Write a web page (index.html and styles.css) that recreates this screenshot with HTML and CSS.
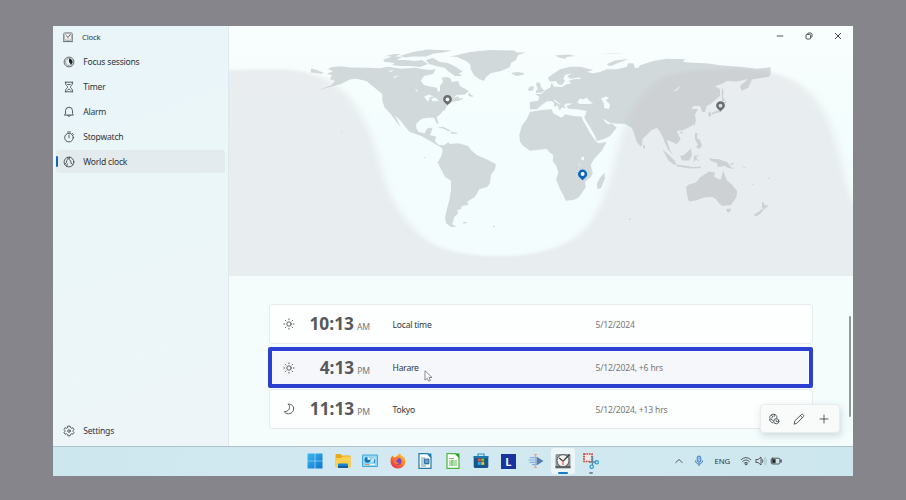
FILE: index.html
```html
<!DOCTYPE html>
<html lang="en">
<head>
<meta charset="utf-8">
<title>Clock</title>
<link rel="stylesheet" href="styles.css">
</head>
<body>
<div class="desktop">
  <div class="app">
    <nav class="nav">
      <div class="nav-title">
        <svg class="ico" viewBox="0 0 12 12"><rect x="1.500" y="1.800" width="9" height="8.700" rx="1.500" fill="#cfd6d9" stroke="#7e888c" stroke-width=".9"/><circle cx="6" cy="6" r="3.700" fill="#f6f8f8" stroke="#909a9e" stroke-width=".7"/><path d="M4 4.500L6 6.300 8.500 3.300" fill="none" stroke="#53595c" stroke-width=".9"/><path d="M6 6.200V8.600" stroke="#e28468" stroke-width=".9"/><path d="M1 10.600h10" stroke="#6f777a"/></svg>
        <span>Clock</span>
      </div>
      <div class="nav-item">
        <svg class="ico" viewBox="0 0 12 12"><circle cx="6" cy="6" r="4.900" fill="none" stroke="#444" stroke-width=".8"/><circle cx="6" cy="6" r="3.400" fill="none" stroke="#555" stroke-width=".8" stroke-dasharray="1.200 .5"/><path d="M6 2.500a3.500 3.500 0 0 1 2.100 6.200L6 6z" fill="#222"/></svg>
        <span>Focus sessions</span>
      </div>
      <div class="nav-item">
        <svg class="ico line" viewBox="0 0 12 12"><path d="M2.200 1.200h7.600M2.200 10.800h7.600M2.700 1.300v1.800C2.700 4.300 4.600 5 4.600 6S2.700 7.700 2.700 8.900v1.800M9.300 1.300v1.800C9.300 4.300 7.400 5 7.400 6S9.300 7.700 9.300 8.900v1.800M4.700 3.500h2.600M4.700 9l1.300-1.100L7.300 9"/></svg>
        <span>Timer</span>
      </div>
      <div class="nav-item">
        <svg class="ico line" viewBox="0 0 12 12"><path d="M1.700 9.100h8.600L9.500 7.500V4.700a3.500 3.500 0 0 0-7 0v2.800zM4.700 9.200c.2 1.800 2.400 1.800 2.600 0"/></svg>
        <span>Alarm</span>
      </div>
      <div class="nav-item">
        <svg class="ico line" viewBox="0 0 12 12"><circle cx="6" cy="6.600" r="4.300"/><path d="M4.500 1h3M6 4v2.800M9.400 2.500l1 1"/></svg>
        <span>Stopwatch</span>
      </div>
      <div class="nav-item selected">
        <svg class="ico line" viewBox="0 0 12 12"><circle cx="6" cy="6" r="4.900"/><path d="M4.600 1.500L5.300 3 3.600 4.700 3.500 6.600 1.700 8.200M6.700 1.200L6 3.200 7.700 5l.4 2.200 1.800 1.500M3.700 10.300L4.300 8"/></svg>
        <span>World clock</span>
      </div>
      <div class="nav-item settings">
        <svg class="ico line" viewBox="0 0 12 12"><path d="M4.900 1.200h2.200l.4 1.400 1 .6 1.400-.4 1.100 1.900-1 1v.7l1 1L9.900 9.200l-1.400-.4-1 .6-.4 1.400H4.900l-.4-1.400-1-.6-1.400.4L1 7.300l1-1v-.7l-1-1 1.100-1.900 1.400.5 1-.6z"/><circle cx="6" cy="6" r="1.300"/></svg>
        <span>Settings</span>
      </div>
    </nav>
    <main class="main">
      <svg class="map" viewBox="229 26 624 250">
        <defs>
          <filter id="soft" x="-10%" y="-10%" width="120%" height="120%"><feGaussianBlur stdDeviation="4 1.500"/></filter>
        </defs>
        <g class="land">
          <path d="M311 68.500l6 1.500 7 3-3 .8-5-.8-5-.5zM311 65.300l2 0-1 .8z"/>
          <path d="M328 68.700L332 67 341 66.300 350 67.500 368 67.700 379.700 68.300 388 66.700 401 68.700 414.700 67.700 422 69 430 70 436 69 433 74 424 76 420.700 81 424 85 428 86 436.700 87.700 438 92 440 91 440 86 443 82 441.700 77.700 446 77 450 78 452 82 458 81 460 86 463 87.700 469 91 465 94.500 456.700 95 452 99 458 96 459 98.500 463.700 97.700 460 100.500 451.700 102 446.700 106 445 110 443 111 440 114.500 436.700 117 438.500 123.500 437 124 434 117.700 428 117.700 423 118.500 419.700 120.300 416.300 124 416.300 128 418.700 132 424.700 133.300 427 128.500 432.500 127.500 431 133 429.500 135 436 136.500 435 141.500 439 145 446 145.500 442 148 436 144.500 431 141.500 421.300 136 409.700 132 404.700 126 400 120 394.700 115.300 400.700 126.700 398 124 390.700 114 384.700 107.700 382.300 101 382.300 94.300 374.700 87.700 366.300 81 356.300 78.700 350 79.500 341 84 330 87 318 90 331 85.500 335 81 329.700 79 332 75.500 327 73.500 333 71.500z"/>
          <path d="M383 60l10-4 9 1-5 3 10 0 8 1 7-1 6 4-8 3-11-1-9 0-8-1 3-2-10-1zM400 56l13-4 15-2.500 24 1-9 2-9 1-8 3-13 0-8 1zM426 60l7-2 7 4 8 1 8 4 7 5-4 1 3 3-7 0-7-5-3-3-9-2-7-2zM386 56l8-2 7 0-7 3z"/>
          <path d="M453 56l17-4 20-2 24 .5 3 2 9 0-8 2.500-2 5-5 3-1 4-9 4-10 2-5 4-2 4-5-2-5-4-3-5-1-6-4-3-9-4-9-1zM511 73l6-1 7 1-1 2-7 1zM555 55.500l14-1 6 1.500-8 1-2 2-6-1.500zM600 54l14-1 11 0M607 64l8-3.500 14-1.500-11 4-7 3-3-.5zM468 95.500l1.500-3.500 1 2.500 3 1.500-1.500 1z"/>
          <path d="M437 127.500l6-.7 9 4.500-4-.3-5-2.500zM451 132l5 .3 2 1.200-7 .5z"/>
          <path d="M441.700 146.700L448.300 142.300 450 144 458.300 143.300 468.300 146 471 150 476.700 155 486.700 159.300 496 164.300 495 169.300 491 175 490 183.300 487.300 186.700 479.300 189.300 475 196.700 467.300 201.700 468.300 205 461.700 206 461 209.300 457.300 210 458.300 213.300 454 217.300 453.300 221.700 452 224 456.700 227 450.700 226.700 446 223.300 445 217.300 446.700 210 449.300 200 451 190 451 180.700 445 176.700 439.300 166 437.700 162.300 441 156.700 442.700 150.700z"/>
          <path d="M463 222l4 0-1 1.500-3-.3zM424 157h1.500v1H424zM493 226h2v1h-2z"/>
          <path d="M530 109.300L529.700 102 538.300 100.700 539.300 96.700 535 94.300 541.700 93.700 545 90.300 550 87.700 551.700 82.700 554 86.700 561.700 87 566.700 84.300 571.700 83.300 568.300 81 573.300 79.300 581.700 78.700 579 77.500 570 78.700 567.300 76 571.700 73.300 565 75 563.300 78.700 565 81 561.700 85.300 558.300 84.300 556 81 550 81.700 547.700 77.700 553.300 73.700 560 69.300 570 66.700 580 66.700 593.300 70 586.700 72 593.300 73.300 600 72 606.700 69.300 616.700 69.300 626.700 67 628.300 63.300 633.300 63.300 635 68 638.300 67.700 640 65.300 653.300 61 666.700 58.700 685 59.300 683 62 693 62.700 706.700 63.300 720 65.300 740 66.700 756.700 68.700 770.700 67.300V73.300L769 76.700 761.700 77.700 752 79.500 748.500 87.500 741.700 91 740 86 748 79 736.700 81.500 726.700 81 722 84 715 86 720 89.300 720 96 711.700 103.300 706.700 106 705 112 702.300 112 700 106 693.300 106 691.700 108.700 698 109.300 695 114.300 696 121 691.700 126 683.300 130 676.700 131 680.700 139.300 676.700 144.300 670 141 666.700 140 670 150 673.500 155.500 668.300 150 664.500 142 663.300 138.300 660 131.700 657 128 651.700 130 646.700 135 642.500 139 642 145 640.700 146.700 636.700 141.700 634 133.300 632 128 625 123.700 616.700 123.700 610 122.700 603.300 118.700 605 122 608.300 124.300 612 123.500 616.700 127.700 610 136 604 139 596.700 141 595 136 588.300 124.300 584.300 117.700 586.700 111 576.700 109.300 568.300 108.700 566.700 106 573 103.500 566 103.500 564 105.500 566 108.700 562 107 560 104 555 100 554 101 563.300 106.700 560 109 558 106.500 551.700 101 546.700 101.500 541 105.500 537.300 109.300z"/>
          <path d="M536 90.500l2-1.500-2-4 1-3 3 1 1 4 3 3.500-2 2-6 .5zM528 89l3-3 3 .5-1 4-4 .5zM554 102l2 0 0 5-2-1zM557 108.500l4 0-1 1.500z"/>
          <path d="M530 112L541.700 110 551.700 109.300 553.300 113.300 561.700 117.700 565 114.300 573.300 116 581.700 116.700 583.300 121 590 132.700 595.700 141 598.300 143.300 606.700 142 601.700 150.700 593.300 160 590.700 165 592.700 173.300 590.700 177.300 585 181.700 585.700 187.300 582.700 191.700 578.300 197.700 573.300 200 565.700 200.700 563.300 195 560 189.300 556 179.300 558.300 172.700 556.700 166.700 552.700 160.700 553.300 155 550 152.700 546.700 149 536.700 150 530 150.700 523.300 146 520 141.700 519.300 135 521.700 126 526.700 119.300z"/>
          <path d="M604.300 172.700L605 178.300 601 188.300 597.300 189 597 183.300 600 177.700zM643 144l2 2.500 0 2-2-.5z"/>
          <path d="M722 87l1.500 4-.5 6 2 4-3 0-.5-7zM721 103l6-2-2 3-2 4-2 4-5 1-5 2 2-3 6-2 3-3zM708 113l3-1 0 4-2 1zM694 121l1.500 1-1 4-1.500-2zM680.500 132l2-1 0 2-2 1zM695 133l2.500 0-.5 5 3 2 2 6-3 3-3-2 2-2-3-6z"/>
          <path d="M662.500 149.500l6 5 6 6 2 4-3 0-5-4zM676 164.500l8 1 9 1.500 8-.5 0 1.500-11 .5-13-2zM680 156l4-1 7-6.500 1 7-3 5-7 0zM694 156l6-1-4 2.500 3.500 4.500-3.500-2.500-2.500 3zM709 158l5 1 4 0 9 3 4 5 3 2-6-1-3-2-7 1-1-4-6-2zM729 164l6-1.500-3 2.500z"/>
          <path d="M751 183l3 1.500-1 .5zM741 165.500l5 2.500-1 .5zM767 179l3-1.500-1 1.500z"/>
          <path d="M686 187L689 184.500 696 182.500 700 177.500 706 173.500 709 171.500 715 172.500 714 176.500 719 179.500 721 179 723 170.500 727 180.500 732 184.500 737 191 736.500 197 731 205 722 206 718 202 716 199 712 197 704 197.500 696 200.500 689 201.500 687 195zM726 209l5-.5-1 3.500-2.500.5zM762 201l3 4 4 .5-5 4-2-2zM754 214.500l5-3 3.500-3 1 1.500-4 4.500-4 2z"/>
          <path d="M341 131l1 .5M629 219l2 .5" fill="none" stroke="#d2d9db"/>
        </g>
        <g class="sea">
          <path d="M577 102.500l3-4 3 1 4-2 1 2 5 4-7 .5-6 0zM601 98.500l5-2 3 1-3 3 4 4-1 4.500-5-1 0-4.500zM424 96.500l5-2 5 2-4 .5-2 5zM431 98.500l4-1 4 3-6 1zM415 88l3 3-1 1zM393 77l6-2-4 3zM388 71l6-1-3 2zM581 158l3-1.500 0 3-2 1zM579 162l1 5-1-2zM674 90.500l7-5-3 4-4 2z"/>
        </g>
        <path class="night" filter="url(#soft)" d="M209 70L275 69C315 69 334 81 348 96C366 117 373 139 380 163C388 194 399 216 425 239C443 251 468 256 498 256C533 256 556 249 573 239C598 222 608 188 616 156C625 116 641 87 666 76C683 70 710 69 733 69C770 69 795 76 812 95C830 114 837 143 843 168C847 184 850 196 856 205L880 215V300H209Z"/>
        <g class="pin"><path d="M447.500 105.200c-1-1.500-4.400-3-4.400-5.900a4.400 4.400 0 0 1 8.800 0c0 2.900-3.400 4.400-4.400 5.900z"/><circle cx="447.500" cy="99.400" r="1.900" fill="#f2f6f6"/></g>
        <g class="pin"><path d="M720.500 111.500c-1-1.500-4.400-3-4.400-5.900a4.400 4.400 0 0 1 8.800 0c0 2.900-3.400 4.400-4.400 5.900z"/><circle cx="720.500" cy="105.700" r="1.900" fill="#d9dddd"/></g>
        <g class="pin current"><path d="M582.600 180.300c-1-1.500-4.600-3.100-4.600-6.100a4.600 4.600 0 0 1 9.200 0c0 3-3.600 4.600-4.600 6.100z"/><circle cx="582.600" cy="174.100" r="2" fill="#fff"/></g>
      </svg>
      <div class="controls">
        <svg viewBox="0 0 8 8"><path d="M.8 4h6.400"/></svg>
        <svg viewBox="0 0 8 8"><rect x="1" y="2.400" width="4.600" height="4.600" rx="1"/><path d="M2.600 2.200V1.700Q2.800 1 3.600 1h2Q7 1 7 2.400v2q0 .8-.8 1.100"/></svg>
        <svg viewBox="0 0 8 8"><path d="M1 1l6 6M7 1L1 7"/></svg>
      </div>
      <div class="list">
        <div class="card">
          <svg class="ico line" viewBox="0 0 12 12"><circle cx="6" cy="6" r="2.200"/><path d="M6 .9v.8M6 10.300v.8M.9 6h.8M10.300 6h.8M2.400 2.400l.6.6M9 9l.6.6M2.400 9.600L3 9M9 3l.6-.6"/></svg>
          <div class="time"><b>10:13</b><span>AM</span></div><div class="city">Local time</div><div class="date">5/12/2024</div>
        </div>
        <div class="card active">
          <svg class="ico line" viewBox="0 0 12 12"><circle cx="6" cy="6" r="2.200"/><path d="M6 .9v.8M6 10.300v.8M.9 6h.8M10.300 6h.8M2.400 2.400l.6.6M9 9l.6.6M2.400 9.600L3 9M9 3l.6-.6"/></svg>
          <div class="time"><b>4:13</b><span>PM</span></div><div class="city">Harare</div><div class="date">5/12/2024, +6 hrs</div>
        </div>
        <div class="card">
          <svg class="ico line" viewBox="0 0 12 12"><path d="M5.500 1.200C8.500.8 10.800 3 10.600 6c-.2 4.600-6.300 6.500-9.300 2.800C4.500 8.500 6.500 7 6.500 4.400 6.500 2.800 6.200 2 5.500 1.200z"/></svg>
          <div class="time"><b>11:13</b><span>PM</span></div><div class="city">Tokyo</div><div class="date">5/12/2024, +13 hrs</div>
        </div>
      </div>
      <div class="scroll"></div>
      <div class="actions">
        <svg class="ico line" viewBox="0 0 12 12"><path d="M4.800 9.900C2.700 8.900 1.200 7.500 1.600 6.300M8.900 4.600C9.200 2.800 7.600 1.200 5.500 1.200S1.700 2.800 1.700 4.500s1.600 1.500 3.300 3M3.400 2.200L5 3.700 3.600 4.800M6.300 1.500l-.2 2"/><circle cx="8.300" cy="8.200" r="2.600"/><path d="M8.100 6.900v1.600h1.200"/></svg>
        <svg class="ico line" viewBox="0 0 12 12"><path d="M1.200 10.800l.7-3L8.500 1.500c1-1 2.900.9 2 2L4.200 9.900zM7.400 2.500l2.100 2.100"/></svg>
        <svg class="ico line" viewBox="0 0 12 12"><path d="M6 2v8M2 6h8"/></svg>
      </div>
      <svg class="cursor" viewBox="0 0 9 12"><path d="M1 .8v9.400l2.200-2 1.500 3 1.700-.8L5 7.500h3z" fill="#fff" stroke="#555b63" stroke-width=".7"/></svg>
    </main>
  </div>
  <footer class="taskbar">
    <div class="apps">
      <div class="task"><svg viewBox="0 0 16 16"><defs><linearGradient id="win" x2="1" y2="1"><stop stop-color="#3bb8ef"/><stop offset="1" stop-color="#0c76cf"/></linearGradient></defs><path fill="url(#win)" d="M.5.5h7.200v7.200H.5zM8.300.5h7.200v7.200H8.300zM.5 8.300h7.200v7.200H.5zM8.300 8.300h7.200v7.200H8.300z"/></svg></div>
      <div class="task"><svg viewBox="0 0 16 16"><path d="M.5 2q0-1 1-1h4l1.500 1.500h7.500q1 0 1 1V14H.5z" fill="#e9a91d"/><path d="M.5 5l5.500 0 1.500-1.500h8V14q0 .8-.8.8H1.300Q.5 14.800.5 14z" fill="#fdcf4e"/><path d="M3 14.800V11.500q0-1 1-1h8q1 0 1 1v3.300z" fill="#1683d8"/><path d="M3 13h10v1.800H3z" fill="#0b5aa4"/></svg></div>
      <div class="task"><svg viewBox="0 0 16 16"><rect x="0" y="1.500" width="16" height="12.500" rx="1" fill="#43a9d9"/><rect x="1" y="2.500" width="14" height="10.500" fill="#8ed8f5"/><circle cx="5.500" cy="6.800" r="2.900" fill="#146fb6"/><path d="M5.500 6.800V3.900a2.900 2.900 0 0 1 2.900 2.900z" fill="#fff"/><path d="M9.500 9.500l1-3 1.500 1 1-3" fill="none" stroke="#f5fbfd" stroke-width="1"/><path d="M12.500 6v4" stroke="#3f8fc4"/><path d="M3 11.500h4" stroke="#e99445" stroke-width="1.200"/><path d="M8 11.500h5" stroke="#e8f5fa"/></svg></div>
      <div class="task"><svg viewBox="0 0 16 16"><defs><linearGradient id="fox" x1="1" y1="0" x2=".2" y2="1"><stop stop-color="#ffdb3d"/><stop offset=".45" stop-color="#ff8a20"/><stop offset="1" stop-color="#ed2853"/></linearGradient></defs><path fill="url(#fox)" d="M8.500 1.500Q9.500.8 9.700.3q1.700 1.500 2.200 3.500l1-.6Q15.500 5 15.500 8.500A7.500 7.200 0 0 1 .5 8.300Q.5 4 2.700 2.500l.7 1.700 2.500-.2z"/><circle cx="8" cy="8.300" r="3.500" fill="#7b45d1"/><path d="M2.800 5.300q3-1.600 6.200.3L6.500 7q-1 2.800 3 3-2 2.200-5 .2z" fill="#ff7932"/></svg></div>
      <div class="task"><svg viewBox="0 0 16 16"><path d="M2 .7h8.500L14 4.300v11H2z" fill="#fff" stroke="#257ba8" stroke-width="1.200"/><path d="M10 .5h4.400v4.400z" fill="#147cad"/><path d="M4 5h4M4 7h3M4 9h3M4 11h8M4 13h5" stroke="#3286af" stroke-width=".8"/><path d="M7.500 6H12v4.500H7.500z" fill="#6b9fc0" stroke="#1a638e" stroke-width=".8"/></svg></div>
      <div class="task"><svg viewBox="0 0 16 16"><path d="M2 .7h8.500L14 4.300v11H2z" fill="#fff" stroke="#47b63c" stroke-width="1.200"/><path d="M10 .5h4.400v4.400z" fill="#209f23"/><path d="M4 5.500h5M4 8h8M4 10h8M4 12h8M7 7v6" stroke="#65bd59"/></svg></div>
      <div class="task"><svg viewBox="0 0 16 16"><path d="M5 3V1h6v2" fill="none" stroke="#2594c8" stroke-width="1.200"/><path d="M.7 3h14.600v10.500q0 1.500-1.500 1.500H2.200Q.7 15 .7 13.500z" fill="#16568e"/><path d="M.7 3h14.600v2H.7z" fill="#1d76b0"/><path d="M4.800 5.500h2.900v2.900H4.800z" fill="#f25231"/><path d="M8.300 5.500h2.900v2.900H8.300z" fill="#86bd26"/><path d="M4.800 9h2.900v2.900H4.800z" fill="#27a6e2"/><path d="M8.300 9h2.900v2.900H8.300z" fill="#f8bd21"/></svg></div>
      <div class="task"><div class="letter">L</div></div>
      <div class="task"><svg viewBox="0 0 16 16"><path d="M8.500 3.500L15.500 8l-7 4.500z" fill="#557eae"/><path d="M2 4.700h6M.5 7h8M1.500 9.300h7M4 11.700h4" stroke="#82aee3" stroke-width="1.200"/><path d="M7.500 1.500v13M6 1.500h3M6 14.500h3" stroke="#e8a19b" stroke-width="1.200"/></svg></div>
      <div class="task open"><svg viewBox="0 0 16 16"><path d="M2 1h12q1.500 0 1.500 1.500V15H.5V2.500Q.5 1 2 1z" fill="#8e9698"/><path d="M.5 13h15v2.300H.5z" fill="#596064"/><circle cx="8" cy="7.700" r="6" fill="#f2f2f1" stroke="#565e62"/><path d="M4.200 5L8 8.200l6.600-6.700" fill="none" stroke="#383e42" stroke-width="1.300"/><path d="M8 7.500v4.700" stroke="#ee6747" stroke-width="1.200"/></svg></div>
      <div class="task running"><svg viewBox="0 0 16 16"><rect x="1" y="1" width="8" height="7.500" fill="#f3e9e8" stroke="#cb4534" stroke-width="1.700" stroke-dasharray="1.700 .8"/><path d="M9.500 3v9M6 9h7" stroke="#6d8495" stroke-width="1.400"/><circle cx="8.700" cy="13.700" r="1.700" fill="none" stroke="#269bd4" stroke-width="1.200"/><circle cx="13.700" cy="9.300" r="1.700" fill="none" stroke="#269bd4" stroke-width="1.200"/></svg></div>
    </div>
    <div class="tray">
      <svg class="chev line" viewBox="0 0 12 12"><path d="M2.800 7.500L6 4.500l3.200 3"/></svg>
      <svg class="mic" viewBox="0 0 12 12"><rect x="4.200" y="1" width="3.600" height="6.200" rx="1.800" fill="#8fc1ea" stroke="#2d6ab3" stroke-width=".8"/><path d="M2.500 5.500c0 4.600 7 4.600 7 0M6 9v2" fill="none" stroke="#2d6ab3" stroke-width=".9"/></svg>
      <span>ENG</span>
      <svg class="line wifi" viewBox="0 0 12 12"><path d="M1.200 4.600q4.800-4.300 9.600 0M2.700 6.400q3.300-3 6.600 0M4.200 8q1.800-1.600 3.600 0"/><circle cx="6" cy="9.300" r=".7"/></svg>
      <svg class="line vol" viewBox="0 0 12 12"><path d="M1.300 4.500h1.800L6 2v8L3.100 7.500H1.300zM7.400 4.500q1.200 1.500 0 3"/><path d="M9 3q2.200 3 0 6M10.500 2q2.200 4 0 8" stroke="#adc0c8"/></svg>
      <svg class="line bat" viewBox="0 0 12 12"><rect x="1.200" y="3.200" width="8.600" height="5.800" rx="1.200"/><path d="M2.400 4.300h2.800v3.600H2.400z" fill="#222"/><path d="M11 5v2" stroke-width="1.400"/></svg>
    </div>
  </footer>
</div>
</body>
</html>
```
FILE: styles.css
```css
* { box-sizing: border-box; }
body {
  margin: 0;
  height: 500px;
  padding: 26px 53px 24px;
  background: #85858b;
  font: 8.600px "Noto Sans", "Open Sans", sans-serif;
  letter-spacing: -.23px;
  color: #30363a;
  overflow: hidden;
}
svg { display: block; flex: none; }
.desktop { width: 800px; height: 450px; display: flex; flex-direction: column; }
.app { display: flex; height: 420px; }
.ico { width: 12px; height: 12px; }
.line { fill: none; stroke: #3d4346; stroke-width: .85; stroke-linejoin: round; stroke-linecap: round; }
.nav {
  width: 176px;
  padding: 0 3px 2px;
  border-right: 1px solid #dfe9ec;
  background: linear-gradient(160deg, #e9f5f9, #ebf6f8 50%, #eef5f9);
  display: flex;
  flex-direction: column;
}
.nav-title { height: 22px; margin-bottom: 2px; padding-left: 6px; display: flex; align-items: center; gap: 8px; font-size: 7.700px; letter-spacing: -.15px; }
.nav-item { height: 23px; margin-bottom: 2px; padding-left: 6.500px; display: flex; align-items: center; gap: 8.700px; border-radius: 3px; }
.nav-item span { padding-top: 1px; }
.selected { background: #e3ebee; position: relative; }
.selected::before { content: ""; position: absolute; left: 0; top: 6px; width: 2px; height: 11px; border-radius: 1px; background: #1168b7; }
.settings { margin-top: auto; }
.main { width: 624px; position: relative; background: #f4fcfc; }
.map { width: 624px; height: 250px; background: linear-gradient(#f9fdfd, #f4fdfd 40%); }
.land { fill: #d2d9db; }
.sea { fill: #f4fcfc; }
.night { fill: #bcb6ba; fill-opacity: .22; }
.pin { fill: #6a6d6e; }
.current { fill: #0b65bd; }
.controls { position: absolute; top: 6px; right: 11px; display: flex; gap: 20.800px; }
.controls svg { width: 8px; height: 8px; fill: none; stroke: #383c3e; stroke-width: .9; }
.list { width: 544px; margin: 28px 0 0 40px; display: flex; flex-direction: column; gap: 3px; }
.card { height: 40px; padding-left: 13px; background: #fdfefe; border: 1px solid #e6eced; border-radius: 3px; display: grid; grid-template-columns: 14px 73px 22.500px 203px 1fr; align-items: center; }
.card.active { height: 41px; width: 545px; margin: 0 0 0 -1px; padding-left: 11px; background: #f6f7fa; border: 4px solid #2b3fd1; border-radius: 2px; }
.card.active + .card { margin-top: -2px; }
.time { display: flex; justify-content: flex-end; align-items: baseline; gap: 3px; color: #747779; letter-spacing: -.1px; }
.time b { font: bold 17.300px/20px "Open Sans", sans-serif; letter-spacing: 0; color: #56595b; }
.city { grid-column: 4; padding-top: 1px; }
.date { color: #747779; letter-spacing: -.18px; padding-top: 1px; }
.scroll { position: absolute; right: 2px; top: 290px; width: 2px; height: 101px; border-radius: 1px; background: #929999; }
.actions { position: absolute; right: 13px; top: 378px; width: 80px; height: 29px; padding-right: 2px; display: flex; align-items: center; justify-content: center; gap: 13px; border-radius: 4px; background: #f9fbfb; border: 1px solid #e8eced; box-shadow: 1px 3px 7px #6d828c45; }
.cursor { position: absolute; left: 195px; top: 344px; width: 9px; height: 12px; }
.taskbar { height: 30px; display: flex; position: relative; background: linear-gradient(100deg, #cde7ef, #d4e9f1 45%, #cde7ee); border-top: 1px solid #abc3ca; }
.apps { display: flex; margin-left: 250px; gap: 3.600px; height: 28px; align-items: center; }
.task { width: 24px; height: 26px; display: flex; align-items: center; justify-content: center; border-radius: 3px; position: relative; }
.task svg { width: 16px; height: 16px; }
.letter { width: 15px; height: 15px; background: #19349c; color: #fff; font: bold 11px/15px "Open Sans", sans-serif; text-align: center; }
.open { background: #ecf5f8; }
.open::after, .running::after { content: ""; position: absolute; bottom: 0; width: 10px; height: 2px; border-radius: 1px; background: #167bc9; }
.running::after { width: 4px; background: #7c8c94; }
.tray { margin-left: auto; margin-right: 71px; height: 28px; display: flex; align-items: center; font-size: 7.800px; letter-spacing: -.15px; }
.tray svg { width: 12px; height: 12px; }
.tray .mic { margin: 0 10px 0 8px; }
.tray .wifi { margin-left: 10px; }
.tray .vol { margin: 0 3px; }
```
